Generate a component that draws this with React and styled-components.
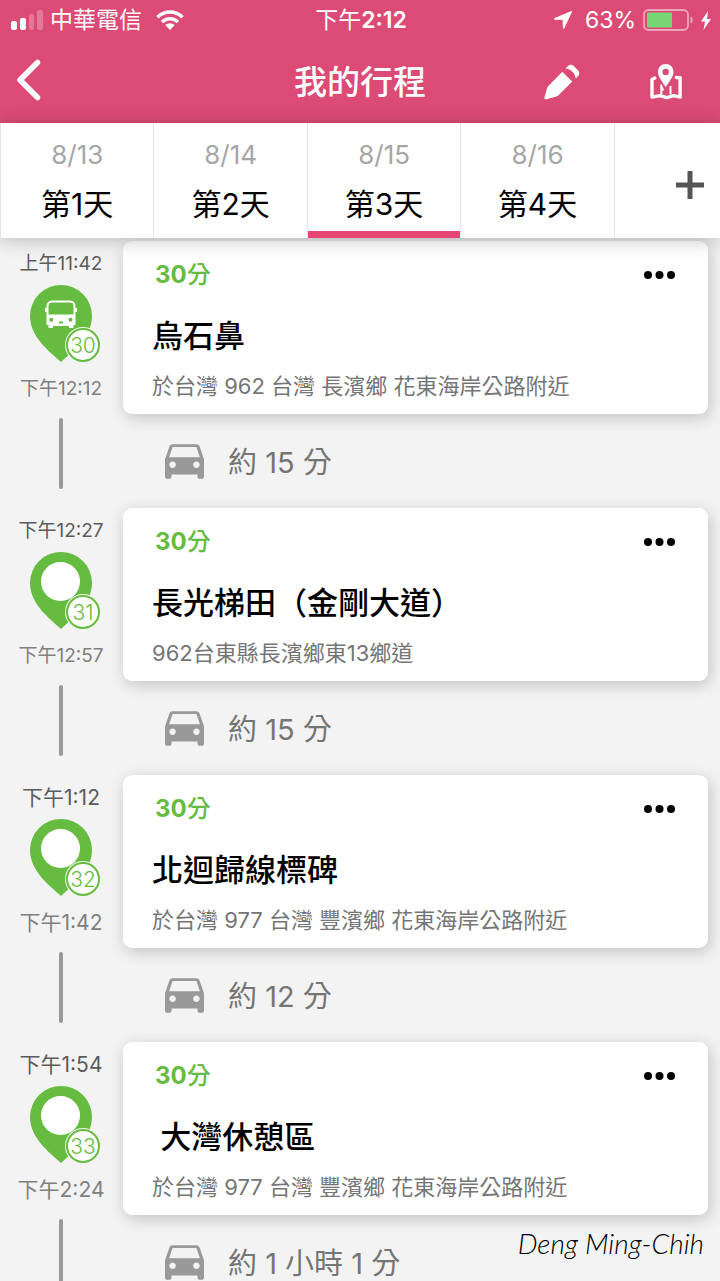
import React from "react";
import styled, { createGlobalStyle } from "styled-components";

const GlobalStyle = createGlobalStyle`
  *, *::before, *::after { box-sizing: border-box; }
  body {
    margin: 0;
    background: #f3f3f3;
    font-family: Inter, "Noto Sans CJK TC", sans-serif;
    font-weight: 390;
    -webkit-font-smoothing: antialiased;
  }
  button { font: inherit; color: inherit; background: none; border: 0; padding: 0; cursor: pointer; }
  svg { display: block; flex: none; }
`;

const Screen = styled.div`
  position: relative;
  display: flex;
  flex-direction: column;
  height: 100vh;
  overflow: hidden;
`;

const Header = styled.header`
  background: #db4b75;
  color: #fff;
`;

const StatusBar = styled.div`
  display: grid;
  grid-template-columns: 1fr auto 1fr;
  align-items: center;
  height: 40px;
  padding: 0 9px 0 11px;
  font-size: 23px;
  line-height: 40px;
`;

const StatusGroup = styled.div`
  display: flex;
  align-items: center;
  gap: 7px;
  justify-content: ${(p) => (p.$end ? "flex-end" : "flex-start")};
`;

const StatusText = styled.span`
  padding: ${(p) => (p.$end ? "0 0 0 6px" : "0 7px 0 0")};
`;

const Clock = styled.time`
  b { font-weight: 600; }
`;

const NavBar = styled.div`
  display: grid;
  grid-template-columns: 1fr auto 1fr;
  align-items: center;
  height: 83px;
  padding: 0 38px 0 17px;
`;

const NavTitle = styled.h1`
  grid-column: 2;
  margin: 0 -21px 0 0;
  font-size: 33px;
  line-height: 40px;
  font-weight: 500;
`;

const NavActions = styled.div`
  display: flex;
  justify-content: flex-end;
  gap: 70px;
`;

const Tabs = styled.nav`
  position: relative;
  z-index: 1;
  flex: none;
  display: grid;
  grid-template-columns: repeat(4, 13fr) 9fr;
  height: 115px;
  background: #fff;
  box-shadow: 0 2px 18px rgba(0, 0, 0, 0.24);
`;

const DayTab = styled.button`
  display: flex;
  flex-direction: column;
  align-items: center;
  padding-top: 14px;
  background:
    linear-gradient(${(p) => (p.$active ? "#e64673, #e64673" : "#fff, #fff")}) bottom / 100% 7px no-repeat;
  border-left: 1px solid #e6e6e6;
`;

const TabDate = styled.span`
  font-size: 26px;
  line-height: 36px;
  color: #a6a6a6;
`;

const TabDay = styled.span`
  margin-top: 12px;
  font-size: 30px;
  line-height: 38px;
  color: #000;
`;

const AddDay = styled.button`
  display: flex;
  align-items: center;
  justify-content: flex-end;
  padding: 9px 16px 0 0;
  border-left: 1px solid #e6e6e6;
`;

const StopList = styled.ol`
  flex: 1;
  min-height: 0;
  margin: 0;
  padding: 3px 12px 0 0;
  list-style: none;
  overflow-y: auto;
  scrollbar-width: none;
`;

const Stop = styled.li`
  display: grid;
  grid-template-columns: 123px 1fr;
`;

const Timeline = styled.div`
  display: flex;
  flex-direction: column;
  align-items: center;
  padding: 11px 1px 19px 0;
`;

const Time = styled.time`
  font-size: ${(p) => (p.$short ? 21 : 19)}px;
  line-height: 24px;
  white-space: nowrap;
  color: ${(p) => (p.$end ? "#808080" : "#5c5c5c")};
`;

const Pin = styled.div`
  position: relative;
  margin: 9px 0 15px;
`;

const PinNumber = styled.span`
  position: absolute;
  right: -8px;
  bottom: 0;
  width: 34px;
  height: 34px;
  border: 2px solid #66bc40;
  border-radius: 50%;
  box-shadow: 0 0 0 1px #f3f3f3;
  background: #fff;
  color: #66bc40;
  font-size: 21px;
  line-height: 31px;
  font-weight: 350;
  text-align: center;
`;

const Connector = styled.div`
  width: 4px;
  height: 71px;
  margin-top: 17px;
  border-radius: 2px;
  background: #999;
`;

const Card = styled.article`
  padding: 18px 33px 14px 29px;
  border-radius: 9px;
  background: #fff;
  box-shadow: 2px 4px 16px rgba(0, 0, 0, 0.2);
`;

const CardTop = styled.div`
  display: flex;
  align-items: center;
  justify-content: space-between;
  height: 32px;
  padding-left: 3px;
`;

const Duration = styled.span`
  font-size: 24px;
  line-height: 34px;
  color: #66bc40;
  font-weight: 500;
  b { font-weight: 700; }
`;

const PlaceName = styled.h2`
  margin: 25px 0 16px;
  font-size: 31px;
  line-height: 40px;
  font-weight: 500;
  white-space: pre;
  color: #000;
`;

const Address = styled.p`
  margin: 0;
  font-size: 22px;
  line-height: 28px;
  color: #757575;
  white-space: nowrap;
`;

const Travel = styled.div`
  display: flex;
  align-items: center;
  gap: 24px;
  height: 94px;
  padding-left: 42px;
  font-size: 29px;
  line-height: 40px;
  color: #757575;
`;

const TravelTime = styled.span`
  padding-top: 3px;
`;

const Signature = styled.div`
  position: absolute;
  z-index: 2;
  right: 16px;
  bottom: 20px;
  font-family: Lato, sans-serif;
  font-style: italic;
  font-weight: 300;
  font-size: 28px;
  line-height: 36px;
  color: #000;
`;

const SignalIcon = () => (
  <svg width="32" height="20" viewBox="0 0 32 20" fill="#fff" aria-hidden="true">
    <rect x="0" y="11" width="6" height="9" rx="2" />
    <rect x="9" y="8" width="6" height="12" rx="2" />
    <rect x="18" y="4" width="5" height="16" rx="2" opacity=".25" />
    <rect x="26" y="0" width="6" height="20" rx="2" opacity=".25" />
  </svg>
);

const WifiIcon = () => (
  <svg width="28" height="20" viewBox="0 0 28 20" fill="none" stroke="#fff" strokeWidth="3.6" aria-hidden="true">
    <path d="M1.500 7.200a17.800 17.800 0 0 1 25 0" />
    <path d="M6 12a11.400 11.400 0 0 1 16 0" />
    <path d="M14 20l-4.700-4.900a6.800 6.800 0 0 1 9.400 0z" fill="#fff" stroke="none" />
  </svg>
);

const LocationIcon = () => (
  <svg width="18" height="18" viewBox="0 0 18 18" fill="#fff" aria-hidden="true">
    <path d="M16.800.2L.7 7.100c-1 .5-.8 1.600.3 1.600l7.600.3.2 7.800c0 1.200 1.200 1.400 1.700.3L17.800 1.300c.4-.8-.2-1.500-1-1.100z" />
  </svg>
);

const BatteryIcon = () => (
  <svg width="51" height="22" viewBox="0 0 51 22" aria-hidden="true">
    <rect x="1" y="1" width="44" height="20" rx="4.500" fill="none" stroke="#eda5ba" strokeWidth="1.800" />
    <rect x="4" y="3.500" width="25" height="15" rx="1" fill="#78d672" />
    <path d="M47.500 7.500c3 1 3 6 0 7z" fill="#eda5ba" />
  </svg>
);

const BoltIcon = () => (
  <svg width="10" height="19" viewBox="0 0 10 19" fill="#fff" aria-hidden="true">
    <path d="M7 0L0 10.500h4L2.500 19 10 8H6z" />
  </svg>
);

const BackIcon = () => (
  <svg width="24" height="42" viewBox="0 0 24 42" fill="none" stroke="#fff" strokeWidth="5.500" strokeLinecap="round" strokeLinejoin="round" aria-hidden="true">
    <path d="M20.500 3.500L3 21l17.500 17.500" />
  </svg>
);

const PencilIcon = () => (
  <svg width="36" height="36" viewBox="0 0 36 36" fill="#fff" aria-hidden="true">
    <path d="M18.300 7.700l10 9.900-13.800 13.700c-.7.600-1.300 1-2.200 1.200L2.300 35.300c-1.300.3-2.200-.5-1.900-1.800L3 24.200c.2-.8.600-1.300 1.100-1.900z" />
    <path d="M21.500 4.500l2.400-2.400c1.600-1.700 4.200-1.700 5.800-.1l4.400 4.400c1.600 1.600 1.600 4.100 0 5.700l-2.500 2.500c0-5-5-10-10.100-10.100z" />
  </svg>
);

const MapIcon = () => (
  <svg width="32" height="36" viewBox="0 0 32 36" fill="none" aria-hidden="true">
    <path d="M4.800 14L2 15.500v17.600l7.800-1.500 7 2 7-2 6.300 1.500V13.800l-3.800-.3" stroke="#fff" strokeWidth="3.400" strokeLinejoin="round" strokeLinecap="round" />
    <path d="M11.300 20.500v10M20.500 22v8.500M11.300 22.500l2 4" stroke="#fff" strokeWidth="2" />
    <path fillRule="evenodd" clipRule="evenodd" d="M15.700 0c4.500 0 7.800 3.300 7.800 7.800 0 5.200-4 9.300-7.800 15.400C12 17.100 8 13 8 7.800 8 3.300 11.300 0 15.700 0zm0 4.700a3.200 3.200 0 1 0 0 6.400 3.200 3.200 0 0 0 0-6.400z" fill="#fff" />
  </svg>
);

const PlusIcon = () => (
  <svg width="28" height="28" viewBox="0 0 28 28" stroke="#555" strokeWidth="5" aria-hidden="true">
    <path d="M14 0v28M0 14h28" />
  </svg>
);

const MoreIcon = () => (
  <svg width="31" height="8" viewBox="0 0 31 8" fill="#000" aria-hidden="true">
    <circle cx="4" cy="4" r="4" />
    <circle cx="15.500" cy="4" r="4" />
    <circle cx="27" cy="4" r="4" />
  </svg>
);

const CarIcon = () => (
  <svg width="39" height="35" viewBox="3 4 18 16" fill="#999" aria-hidden="true">
    <path d="M18.920 5.010C18.720 4.420 18.160 4 17.500 4h-11c-.66 0-1.210.42-1.420 1.010L3 11v8c0 .55.45 1 1 1h1c.55 0 1-.45 1-1v-1h12v1c0 .55.45 1 1 1h1c.55 0 1-.45 1-1v-8l-2.080-5.990zM6.500 15c-.83 0-1.500-.67-1.500-1.500S5.670 12 6.500 12s1.500.67 1.500 1.500S7.330 15 6.500 15zm11 0c-.83 0-1.500-.67-1.500-1.500s.67-1.500 1.500-1.500 1.500.67 1.500 1.500-.67 1.500-1.500 1.500zM4.900 10l1.600-4.700h11L19.100 10z" />
  </svg>
);

const PinIcon = ({ bus }) => (
  <svg width="62" height="77" viewBox="0 0 62 77" aria-hidden="true">
    <path d="M31 77C20 67 0 52 0 31a31 31 0 0 1 62 0C62 52 42 67 31 77z" fill="#66bc40" />
    {bus ? (
      <g>
        <path d="M22 15.500h18a5.500 5.500 0 0 1 5.500 5.500V40H43.500v3H39v-2H23v2h-4.500v-3h-2V21a5.500 5.500 0 0 1 5.500-5.500z" fill="#fff" />
        <path d="M22 17.500h18a3.500 3.500 0 0 1 3.500 3.500v8.500h-25V21a3.500 3.500 0 0 1 3.500-3.500z" fill="#66bc40" />
        <path d="M15 23h2v4h-2zM45 23h2v4h-2z" fill="#fff" />
        <circle cx="21.300" cy="34.800" r="2" fill="#66bc40" />
        <circle cx="40.500" cy="34.800" r="2" fill="#66bc40" />
        <rect x="29" y="36.500" width="4" height="2" fill="#66bc40" />
      </g>
    ) : (
      <circle cx="30.500" cy="29.500" r="19.500" fill="#fff" />
    )}
  </svg>
);

const days = [
  { date: "8/13", label: "第1天" },
  { date: "8/14", label: "第2天" },
  { date: "8/15", label: "第3天", active: true },
  { date: "8/16", label: "第4天" },
];

const stops = [
  { no: 30, bus: true, from: "上午11:42", to: "下午12:12", name: "烏石鼻", address: "於台灣 962 台灣 長濱鄉 花東海岸公路附近", travel: "約 15 分" },
  { no: 31, from: "下午12:27", to: "下午12:57", name: "長光梯田（金剛大道）", address: "962台東縣長濱鄉東13鄉道", travel: "約 15 分" },
  { no: 32, from: "下午1:12", to: "下午1:42", name: "北迴歸線標碑", address: "於台灣 977 台灣 豐濱鄉 花東海岸公路附近", travel: "約 12 分" },
  { no: 33, from: "下午1:54", to: "下午2:24", name: " 大灣休憩區", address: "於台灣 977 台灣 豐濱鄉 花東海岸公路附近", travel: "約 1 小時 1 分" },
];

const StopRow = ({ stop }) => (
  <Stop>
    <Timeline>
      <Time $short={stop.from.length < 7}>{stop.from}</Time>
      <Pin>
        <PinIcon bus={stop.bus} />
        <PinNumber>{stop.no}</PinNumber>
      </Pin>
      <Time $end $short={stop.to.length < 7}>{stop.to}</Time>
      <Connector />
    </Timeline>
    <div>
      <Card>
        <CardTop>
          <Duration><b>30</b>分</Duration>
          <button type="button" aria-label="更多"><MoreIcon /></button>
        </CardTop>
        <PlaceName>{stop.name}</PlaceName>
        <Address>{stop.address}</Address>
      </Card>
      <Travel>
        <CarIcon />
        <TravelTime>{stop.travel}</TravelTime>
      </Travel>
    </div>
  </Stop>
);

export default function App() {
  return (
    <Screen>
      <GlobalStyle />
      <Header>
        <StatusBar>
          <StatusGroup>
            <SignalIcon />
            <StatusText>中華電信</StatusText>
            <WifiIcon />
          </StatusGroup>
          <Clock>下午<b>2:12</b></Clock>
          <StatusGroup $end>
            <LocationIcon />
            <StatusText $end>63%</StatusText>
            <BatteryIcon />
            <BoltIcon />
          </StatusGroup>
        </StatusBar>
        <NavBar>
          <div>
            <button type="button" aria-label="返回"><BackIcon /></button>
          </div>
          <NavTitle>我的行程</NavTitle>
          <NavActions>
            <button type="button" aria-label="編輯"><PencilIcon /></button>
            <button type="button" aria-label="地圖"><MapIcon /></button>
          </NavActions>
        </NavBar>
      </Header>
      <Tabs>
        {days.map((day) => (
          <DayTab key={day.date} type="button" $active={day.active}>
            <TabDate>{day.date}</TabDate>
            <TabDay>{day.label}</TabDay>
          </DayTab>
        ))}
        <AddDay type="button" aria-label="新增一天"><PlusIcon /></AddDay>
      </Tabs>
      <StopList>
        {stops.map((stop) => (
          <StopRow key={stop.no} stop={stop} />
        ))}
      </StopList>
      <Signature>Deng Ming-Chih</Signature>
    </Screen>
  );
}
